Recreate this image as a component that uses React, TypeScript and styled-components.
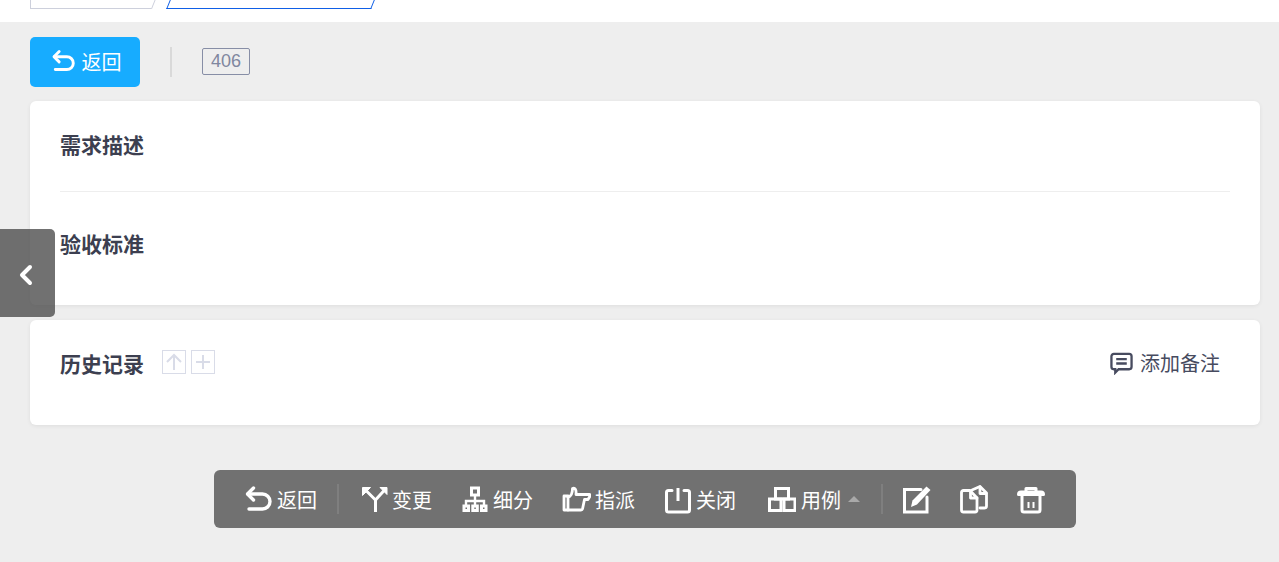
import React from "react";
import styled, { createGlobalStyle } from "styled-components";

const GlobalStyle = createGlobalStyle`
  html, body {
    margin: 0;
    padding: 0;
    height: 100%;
    overflow: hidden;
    background: #eeeeee;
    font-family: "Noto Sans CJK SC", "Liberation Sans", sans-serif;
  }
`;

const Page = styled.div`
  position: relative;
  height: 562px;
  display: flex;
  flex-direction: column;
  background: #eeeeee;
`;

const TabBar = styled.div`
  height: 22px;
  flex: none;
  background: #fff;
  overflow: hidden;
  display: flex;
  align-items: flex-start;
  padding-left: 30px;
`;

const PlainTab = styled.div`
  position: relative;
  width: 121px;
  height: 9px;
  box-sizing: border-box;
  border-left: 1px solid #cdd0dc;
  border-bottom: 1px solid #cdd0dc;
  &::after {
    content: "";
    position: absolute;
    right: -3px;
    bottom: -1px;
    width: 1px;
    height: 10px;
    background: #cdd0dc;
    transform: skewX(-22deg);
  }
`;

const ActiveTab = styled.div`
  width: 205px;
  height: 9px;
  margin-left: 17px;
  box-sizing: border-box;
  border: 1px solid #0f5fe6;
  border-top: none;
  transform: skewX(-22deg);
`;

const Content = styled.div`
  padding: 15px 19px 0 30px;
  display: flex;
  flex-direction: column;
`;

const HeadRow = styled.div`
  display: flex;
  align-items: center;
  height: 50px;
`;

const BackButton = styled.button`
  width: 110px;
  height: 50px;
  border: none;
  border-radius: 5px;
  background: #17acff;
  color: #fff;
  font: 20px "Noto Sans CJK SC", sans-serif;
  display: flex;
  align-items: center;
  justify-content: center;
  gap: 7px;
  padding: 0 0 2px 2px;
`;

const VLine = styled.div`
  width: 2px;
  height: 30px;
  margin: 0 30px;
  background: #d9d9d9;
`;

const IdTag = styled.span`
  box-sizing: border-box;
  width: 48px;
  height: 27px;
  margin-bottom: 2px;
  border: 1px solid #878ea6;
  border-radius: 2px;
  color: #80879f;
  font: 18px/25px "Liberation Sans", Arial, sans-serif;
  text-align: center;
`;

const Card = styled.section`
  background: #fff;
  border-radius: 6px;
  box-shadow: 0 1px 4px rgba(0, 0, 0, 0.07);
  padding: 0 30px;
`;

const DescCard = styled(Card)`
  margin-top: 14px;
  height: 204px;
`;

const HistoryCard = styled(Card)`
  margin-top: 15px;
  height: 105px;
  display: flex;
  align-items: flex-start;
  padding-top: 28px;
  box-sizing: border-box;
`;

const Title = styled.h3`
  margin: 0;
  font-size: 21px;
  font-weight: 700;
  line-height: 30px;
  color: #3c3f50;
`;

const Block = styled.div<{ $height: number; $top: number }>`
  height: ${(p) => p.$height}px;
  padding-top: ${(p) => p.$top}px;
  box-sizing: border-box;
`;

const Divider = styled.div`
  height: 1px;
  background: #eeeeee;
`;

const SmallBtn = styled.span`
  box-sizing: border-box;
  width: 24px;
  height: 24px;
  border: 1px solid #d9dce8;
  display: flex;
  align-items: center;
  justify-content: center;
`;

const SmallBtns = styled.div`
  display: flex;
  gap: 5px;
  margin-left: 18px;
  margin-top: 2px;
`;

const AddNote = styled.div`
  margin-left: auto;
  margin-right: 10px;
  display: flex;
  align-items: center;
  gap: 7px;
  font-size: 20px;
  line-height: 30px;
  color: #474b5f;
`;

const SideHandle = styled.div`
  position: absolute;
  left: 0;
  top: 229px;
  width: 55px;
  height: 88px;
  border-radius: 0 5px 5px 0;
  background: rgba(82, 82, 82, 0.82);
  display: flex;
  align-items: center;
  justify-content: center;
  padding: 4px 4px 0 0;
  box-sizing: border-box;
`;

const ToolbarWrap = styled.div`
  display: flex;
  justify-content: center;
  margin-top: 45px;
`;

const Toolbar = styled.div`
  box-sizing: border-box;
  width: 862px;
  height: 58px;
  padding-left: 30px;
  border-radius: 6px;
  background: #717171;
  display: flex;
  align-items: center;
  color: #fff;
  font-size: 20px;
`;

const ToolItem = styled.div<{ $ml?: number; $gap?: number }>`
  display: flex;
  align-items: center;
  gap: ${(p) => p.$gap ?? 4}px;
  margin-left: ${(p) => p.$ml ?? 0}px;
  white-space: nowrap;
`;

const ToolSep = styled.div<{ $ml: number }>`
  width: 2px;
  height: 30px;
  margin-left: ${(p) => p.$ml}px;
  background: #7f7f7f;
`;

const Caret = styled.span`
  width: 0;
  height: 0;
  margin-left: 2px;
  border-left: 6px solid transparent;
  border-right: 6px solid transparent;
  border-bottom: 6px solid #a9a9a9;
`;

type IconProps = { size?: number };

const stroke = {
  fill: "none",
  stroke: "#fff",
  strokeWidth: 3.4,
  strokeLinecap: "round" as const,
  strokeLinejoin: "round" as const,
};

const UndoIcon = ({ size = 28 }: IconProps) => (
  <svg width={size} height={size} viewBox="0 0 28 28" {...stroke}>
    <path d="M4 9h14.500a7.500 7.500 0 0 1 0 15H5" />
    <path d="M9.500 3 3.500 9l6 6" />
  </svg>
);

const BranchIcon = () => (
  <svg width="28" height="30" viewBox="0 0 28 30" {...stroke} strokeWidth={3} strokeLinecap="butt">
    <path d="M15.500 28V16L5 5.500" />
    <path d="M15.500 16 25 5.500" />
    <path d="M2.500 3.500h8L2.500 11.500zM27 3.500h-7L27 10.500z" fill="#fff" strokeWidth="1" />
  </svg>
);

const TreeIcon = () => (
  <svg width="26" height="28" viewBox="0 0 26 28" fill="none" stroke="#fff" strokeWidth="3">
    <rect x="9.500" y="3" width="7" height="7" />
    <path d="M13 10v6M4 21v-5h18v5M13 16v5" strokeWidth="2.400" />
    <rect x="2" y="21" width="4.500" height="4.500" />
    <rect x="10.800" y="21" width="4.500" height="4.500" />
    <rect x="19.500" y="21" width="4.500" height="4.500" />
  </svg>
);

const HandIcon = () => (
  <svg width="30" height="28" viewBox="0 0 30 28" {...stroke} strokeWidth={2.800}>
    <path d="M3 11h4v14H3z" />
    <path d="M7 12c3-.5 4.500-3 4.500-8.500 2.500-1 4 1 3.500 6h13.500c.8 0 .8 1 .4 1.800L27 14.500h-3.500L21.500 24c-.2.8-.8 1-1.500 1H7" />
  </svg>
);

const PowerIcon = () => (
  <svg width="28" height="30" viewBox="0 0 28 30" {...stroke} strokeWidth={3}>
    <path d="M8 6.500H4.500a2 2 0 0 0-2 2V26a2 2 0 0 0 2 2h19a2 2 0 0 0 2-2V8.500a2 2 0 0 0-2-2H20" />
    <path d="M14 4v13" strokeLinecap="butt" />
  </svg>
);

const BlocksIcon = () => (
  <svg width="28" height="30" viewBox="0 0 28 30" fill="none" stroke="#fff" strokeWidth="3">
    <rect x="7.500" y="4.500" width="13" height="10.500" />
    <rect x="1.500" y="15" width="11.500" height="11.500" />
    <rect x="16" y="15" width="11" height="11.500" />
  </svg>
);

const EditIcon = () => (
  <svg width="30" height="30" viewBox="0 0 30 30" {...stroke} strokeWidth={3}>
    <path d="M19 5.500H2.500v22.500H25V13" strokeLinejoin="miter" />
    <path d="M9 23l1.500-6.500L24.500 2.500l4 3.500L15 20.500z" fill="#fff" stroke="none" />
  </svg>
);

const CopyIcon = () => (
  <svg width="30" height="30" viewBox="0 0 30 30" {...stroke} strokeWidth={2.800}>
    <path d="M11 6.500H4.500a2 2 0 0 0-2 2V26a2 2 0 0 0 2 2H16a2 2 0 0 0 2-2V14z" />
    <path d="M11.500 7v7H18" />
    <path d="M13 6l8-3.500L27.500 9v13a2 2 0 0 1-2 2H21" />
    <path d="M21 3v6.500h6" />
  </svg>
);

const TrashIcon = () => (
  <svg width="30" height="30" viewBox="0 0 30 30" {...stroke} strokeWidth={3}>
    <path d="M2.500 10.500c0-2 1-2.500 2.500-2.500h20c1.500 0 2.500.5 2.500 2.500z" />
    <path d="M10 7V4.500h10V7" />
    <path d="M6 12v14a2 2 0 0 0 2 2h14a2 2 0 0 0 2-2V12" />
    <path d="M12.500 18v6M17.500 18v6" strokeWidth={2} strokeLinecap="butt" />
  </svg>
);

const NoteIcon = () => (
  <svg width="23" height="23" viewBox="0 0 24 24" fill="none" stroke="#474b5f" strokeWidth="2.400">
    <path d="M4 2h16a2.500 2.500 0 0 1 2.500 2.500v11A2.500 2.500 0 0 1 20 18H9l-3.500 3.500V18H4a2.500 2.500 0 0 1-2.500-2.500v-11A2.500 2.500 0 0 1 4 2z" />
    <path d="M6.500 7.500h11M6.500 12h11" />
  </svg>
);

const ChevronIcon = () => (
  <svg width="16" height="24" viewBox="0 0 16 24" fill="none" stroke="#fff" strokeWidth="4" strokeLinecap="round" strokeLinejoin="round">
    <path d="M12 4 4 12l8 8" />
  </svg>
);

const ArrowUpGlyph = () => (
  <svg width="18" height="18" viewBox="0 0 18 18" fill="none" stroke="#d9dce8" strokeWidth="2">
    <path d="M9 17V2M2 9l7-7 7 7" />
  </svg>
);

const PlusGlyph = () => (
  <svg width="16" height="16" viewBox="0 0 16 16" fill="none" stroke="#d9dce8" strokeWidth="2">
    <path d="M8 1v14M1 8h14" />
  </svg>
);

export default function App() {
  return (
    <Page>
      <GlobalStyle />
      <TabBar>
        <PlainTab />
        <ActiveTab />
      </TabBar>
      <Content>
        <HeadRow>
          <BackButton>
            <UndoIcon size={24} />
            返回
          </BackButton>
          <VLine />
          <IdTag>406</IdTag>
        </HeadRow>
        <DescCard>
          <Block $height={90} $top={28}>
            <Title>需求描述</Title>
          </Block>
          <Divider />
          <Block $height={113} $top={36}>
            <Title>验收标准</Title>
          </Block>
        </DescCard>
        <HistoryCard>
          <Title>历史记录</Title>
          <SmallBtns>
            <SmallBtn>
              <ArrowUpGlyph />
            </SmallBtn>
            <SmallBtn>
              <PlusGlyph />
            </SmallBtn>
          </SmallBtns>
          <AddNote>
            <NoteIcon />
            添加备注
          </AddNote>
        </HistoryCard>
        <ToolbarWrap>
          <Toolbar>
            <ToolItem $gap={5}>
              <UndoIcon />
              返回
            </ToolItem>
            <ToolSep $ml={20} />
            <ToolItem $ml={21}>
              <BranchIcon />
              变更
            </ToolItem>
            <ToolItem $ml={30} $gap={5}>
              <TreeIcon />
              细分
            </ToolItem>
            <ToolItem $ml={28}>
              <HandIcon />
              指派
            </ToolItem>
            <ToolItem $ml={29}>
              <PowerIcon />
              关闭
            </ToolItem>
            <ToolItem $ml={32} $gap={5}>
              <BlocksIcon />
              用例
              <Caret />
            </ToolItem>
            <ToolSep $ml={21} />
            <ToolItem $ml={19}>
              <EditIcon />
            </ToolItem>
            <ToolItem $ml={27}>
              <CopyIcon />
            </ToolItem>
            <ToolItem $ml={27}>
              <TrashIcon />
            </ToolItem>
          </Toolbar>
        </ToolbarWrap>
      </Content>
      <SideHandle>
        <ChevronIcon />
      </SideHandle>
    </Page>
  );
}
